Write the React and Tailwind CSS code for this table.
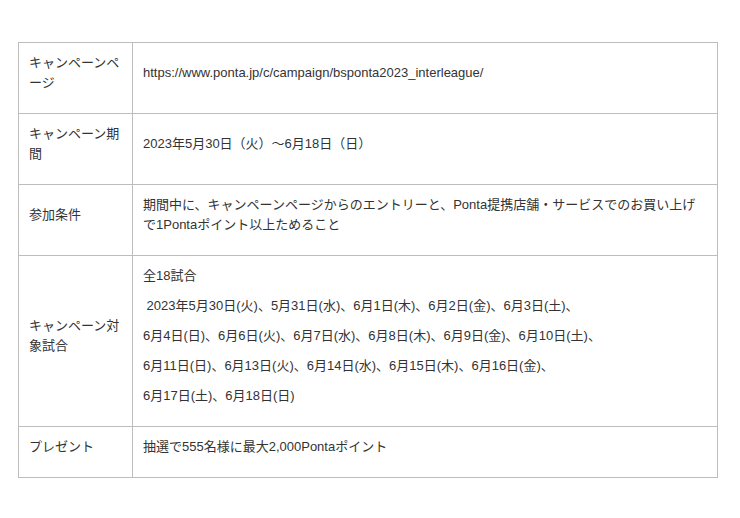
const rows = [
  {
    label: 'キャンペーンページ',
    body: ['https://www.ponta.jp/c/campaign/bsponta2023_interleague/'],
  },
  {
    label: 'キャンペーン期間',
    body: ['2023年5月30日（火）～6月18日（日）'],
  },
  {
    label: '参加条件',
    body: ['期間中に、キャンペーンページからのエントリーと、Ponta提携店舗・サービスでのお買い上げで1Pontaポイント以上ためること'],
  },
  {
    label: 'キャンペーン対象試合',
    body: [
      '全18試合',
      '\u00a02023年5月30日(火)、5月31日(水)、6月1日(木)、6月2日(金)、6月3日(土)、',
      '6月4日(日)、6月6日(火)、6月7日(水)、6月8日(木)、6月9日(金)、6月10日(土)、',
      '6月11日(日)、6月13日(火)、6月14日(水)、6月15日(木)、6月16日(金)、',
      '6月17日(土)、6月18日(日)',
    ],
  },
  {
    label: 'プレゼント',
    body: ['抽選で555名様に最大2,000Pontaポイント'],
  },
];

export default function App() {
  return (
    <div className="min-h-[518px] bg-white pt-[42px] pl-[18px] font-['Liberation_Sans','Noto_Sans_CJK_JP',sans-serif] text-[13px] leading-[20px] text-[#333]">
      <table className="w-[700px] border-collapse">
        <tbody>
          {rows.map((row) => (
            <tr key={row.label}>
              <td className="w-[114px] border border-[#bdbdbd] px-[10px] pt-[10px] pb-[20px] align-middle">
                <p>{row.label}</p>
              </td>
              <td className="border border-[#bdbdbd] px-[10px] pt-[10px] pb-[20px] align-middle">
                {row.body.map((line, i) => (
                  <p key={i} className="mb-[10px] last:mb-0">{line}</p>
                ))}
              </td>
            </tr>
          ))}
        </tbody>
      </table>
    </div>
  );
}
